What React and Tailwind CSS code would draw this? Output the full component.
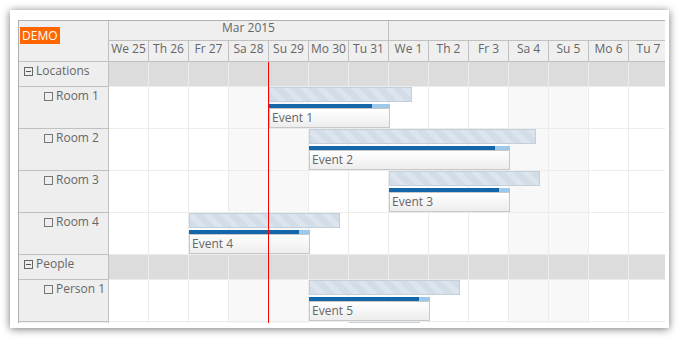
import React from "react";

const days = [
  { label: "We 25" },
  { label: "Th 26" },
  { label: "Fr 27" },
  { label: "Sa 28", weekend: true },
  { label: "Su 29", weekend: true },
  { label: "Mo 30" },
  { label: "Tu 31" },
  { label: "We 1" },
  { label: "Th 2" },
  { label: "Fr 3" },
  { label: "Sa 4", weekend: true },
  { label: "Su 5", weekend: true },
  { label: "Mo 6" },
  { label: "Tu 7" },
];

// left = px from the first day cell, widths in px
const rows = [
  { type: "group", name: "Locations" },
  { name: "Room 1", event: { text: "Event 1", left: 160, hatch: 143, box: 121, done: 103 } },
  { name: "Room 2", event: { text: "Event 2", left: 200, hatch: 227, box: 201, done: 186 } },
  { name: "Room 3", event: { text: "Event 3", left: 280, hatch: 151, box: 121, done: 110 } },
  { name: "Room 4", event: { text: "Event 4", left: 80, hatch: 151, box: 121, done: 110 } },
  { type: "group", name: "People" },
  { name: "Person 1", event: { text: "Event 5", left: 200, hatch: 151, box: 121, done: 110 } },
  // last row is cut off by the viewport, only the top of its bar shows
  { name: "", event: { text: "", left: 240, hatch: 71, box: 121, done: 110 } },
];

const Event = ({ ev }) => (
  <div className="absolute top-0 z-10" style={{ left: ev.left }}>
    <div
      className="h-[15px] border border-[#c5cfd9] bg-[image:repeating-linear-gradient(45deg,#d2dde8_0px,#d2dde8_6px,#dce5ee_6px,#dce5ee_12px)]"
      style={{ width: ev.hatch }}
    />
    <div className="mt-[2px] flex h-[4px]" style={{ width: ev.box }}>
      <div className="h-full bg-[#1366aa]" style={{ width: ev.done }} />
      <div className="h-full flex-1 bg-[#9dc8ea]" />
    </div>
    <div
      className="h-[20px] border border-[#c8c8c8] bg-[linear-gradient(#ffffff,#ededed)] pl-[2px] text-[12px] leading-[17px] text-[#666]"
      style={{ width: ev.box }}
    >
      {ev.text}
    </div>
  </div>
);

const Row = ({ row }) => {
  const group = row.type === "group";
  return (
    <div className={`flex ${group ? "h-[25px]" : "h-[42px]"}`}>
      <div className="flex w-[90px] shrink-0 items-start border-r border-b border-[#c0c0c0] bg-[#eeeeee] pt-[1px] text-[12px] leading-[16px] text-[#666]">
        {group ? (
          <div className="flex items-center pl-[5px]">
            <span className="mr-[3px] flex h-[9px] w-[9px] items-center justify-center border border-[#666]">
              <span className="h-px w-[5px] bg-[#555]" />
            </span>
            {row.name}
          </div>
        ) : row.name ? (
          <div className="flex items-center pl-[25px]">
            <span className="mr-[3px] h-[9px] w-[9px] border border-[#777]" />
            {row.name}
          </div>
        ) : null}
      </div>
      <div className="relative flex">
        {days.map((d) => (
          <div
            key={d.label}
            className={`h-full w-[40px] shrink-0 border-r border-b border-[#ececec] ${
              group ? "bg-[#dcdcdc]" : d.weekend ? "bg-[#f8f8f8]" : "bg-white"
            }`}
          />
        ))}
        {row.event && <Event ev={row.event} />}
      </div>
    </div>
  );
};

export default function App() {
  return (
    <div className="h-[340px] w-[680px] bg-white pt-[10px] pl-[10px] font-['Open_Sans',sans-serif]">
      <div className="h-[318px] w-[659px] bg-white pt-[10px] pl-[8px] shadow-[0_1px_8px_rgba(0,0,0,0.55)]">
        <div className="h-[303px] w-[647px] overflow-hidden border-t border-l border-[#b0b0b0]">
          {/* header */}
          <div className="flex">
            <div className="h-[41px] w-[90px] shrink-0 border-r border-b border-[#c0c0c0] bg-[#efefef] p-px">
              <span className="inline-block h-[17px] bg-[#ff6600] px-[2px] text-[12px] leading-[17px] text-white">
                DEMO
              </span>
            </div>
            <div className="bg-[#efefef] text-[12px] text-[#666]">
              <div className="flex h-[20px] border-b border-[#c0c0c0]">
                <div className="w-[280px] shrink-0 border-r border-[#c0c0c0] text-center leading-[12px] pt-[1px]">
                  Mar 2015
                </div>
                <div className="w-[280px] shrink-0" />
              </div>
              <div className="flex h-[21px] border-b border-[#c0c0c0]">
                {days.map((d) => (
                  <div
                    key={d.label}
                    className="w-[40px] shrink-0 border-r border-[#c0c0c0] text-center leading-[14px] pt-px"
                  >
                    {d.label}
                  </div>
                ))}
              </div>
            </div>
          </div>
          {/* body */}
          <div className="relative">
            {rows.map((r, i) => (
              <Row key={i} row={r} />
            ))}
            <div className="absolute top-0 bottom-0 left-[249px] z-20 w-px bg-[#ff0000]" />
          </div>
        </div>
      </div>
    </div>
  );
}
